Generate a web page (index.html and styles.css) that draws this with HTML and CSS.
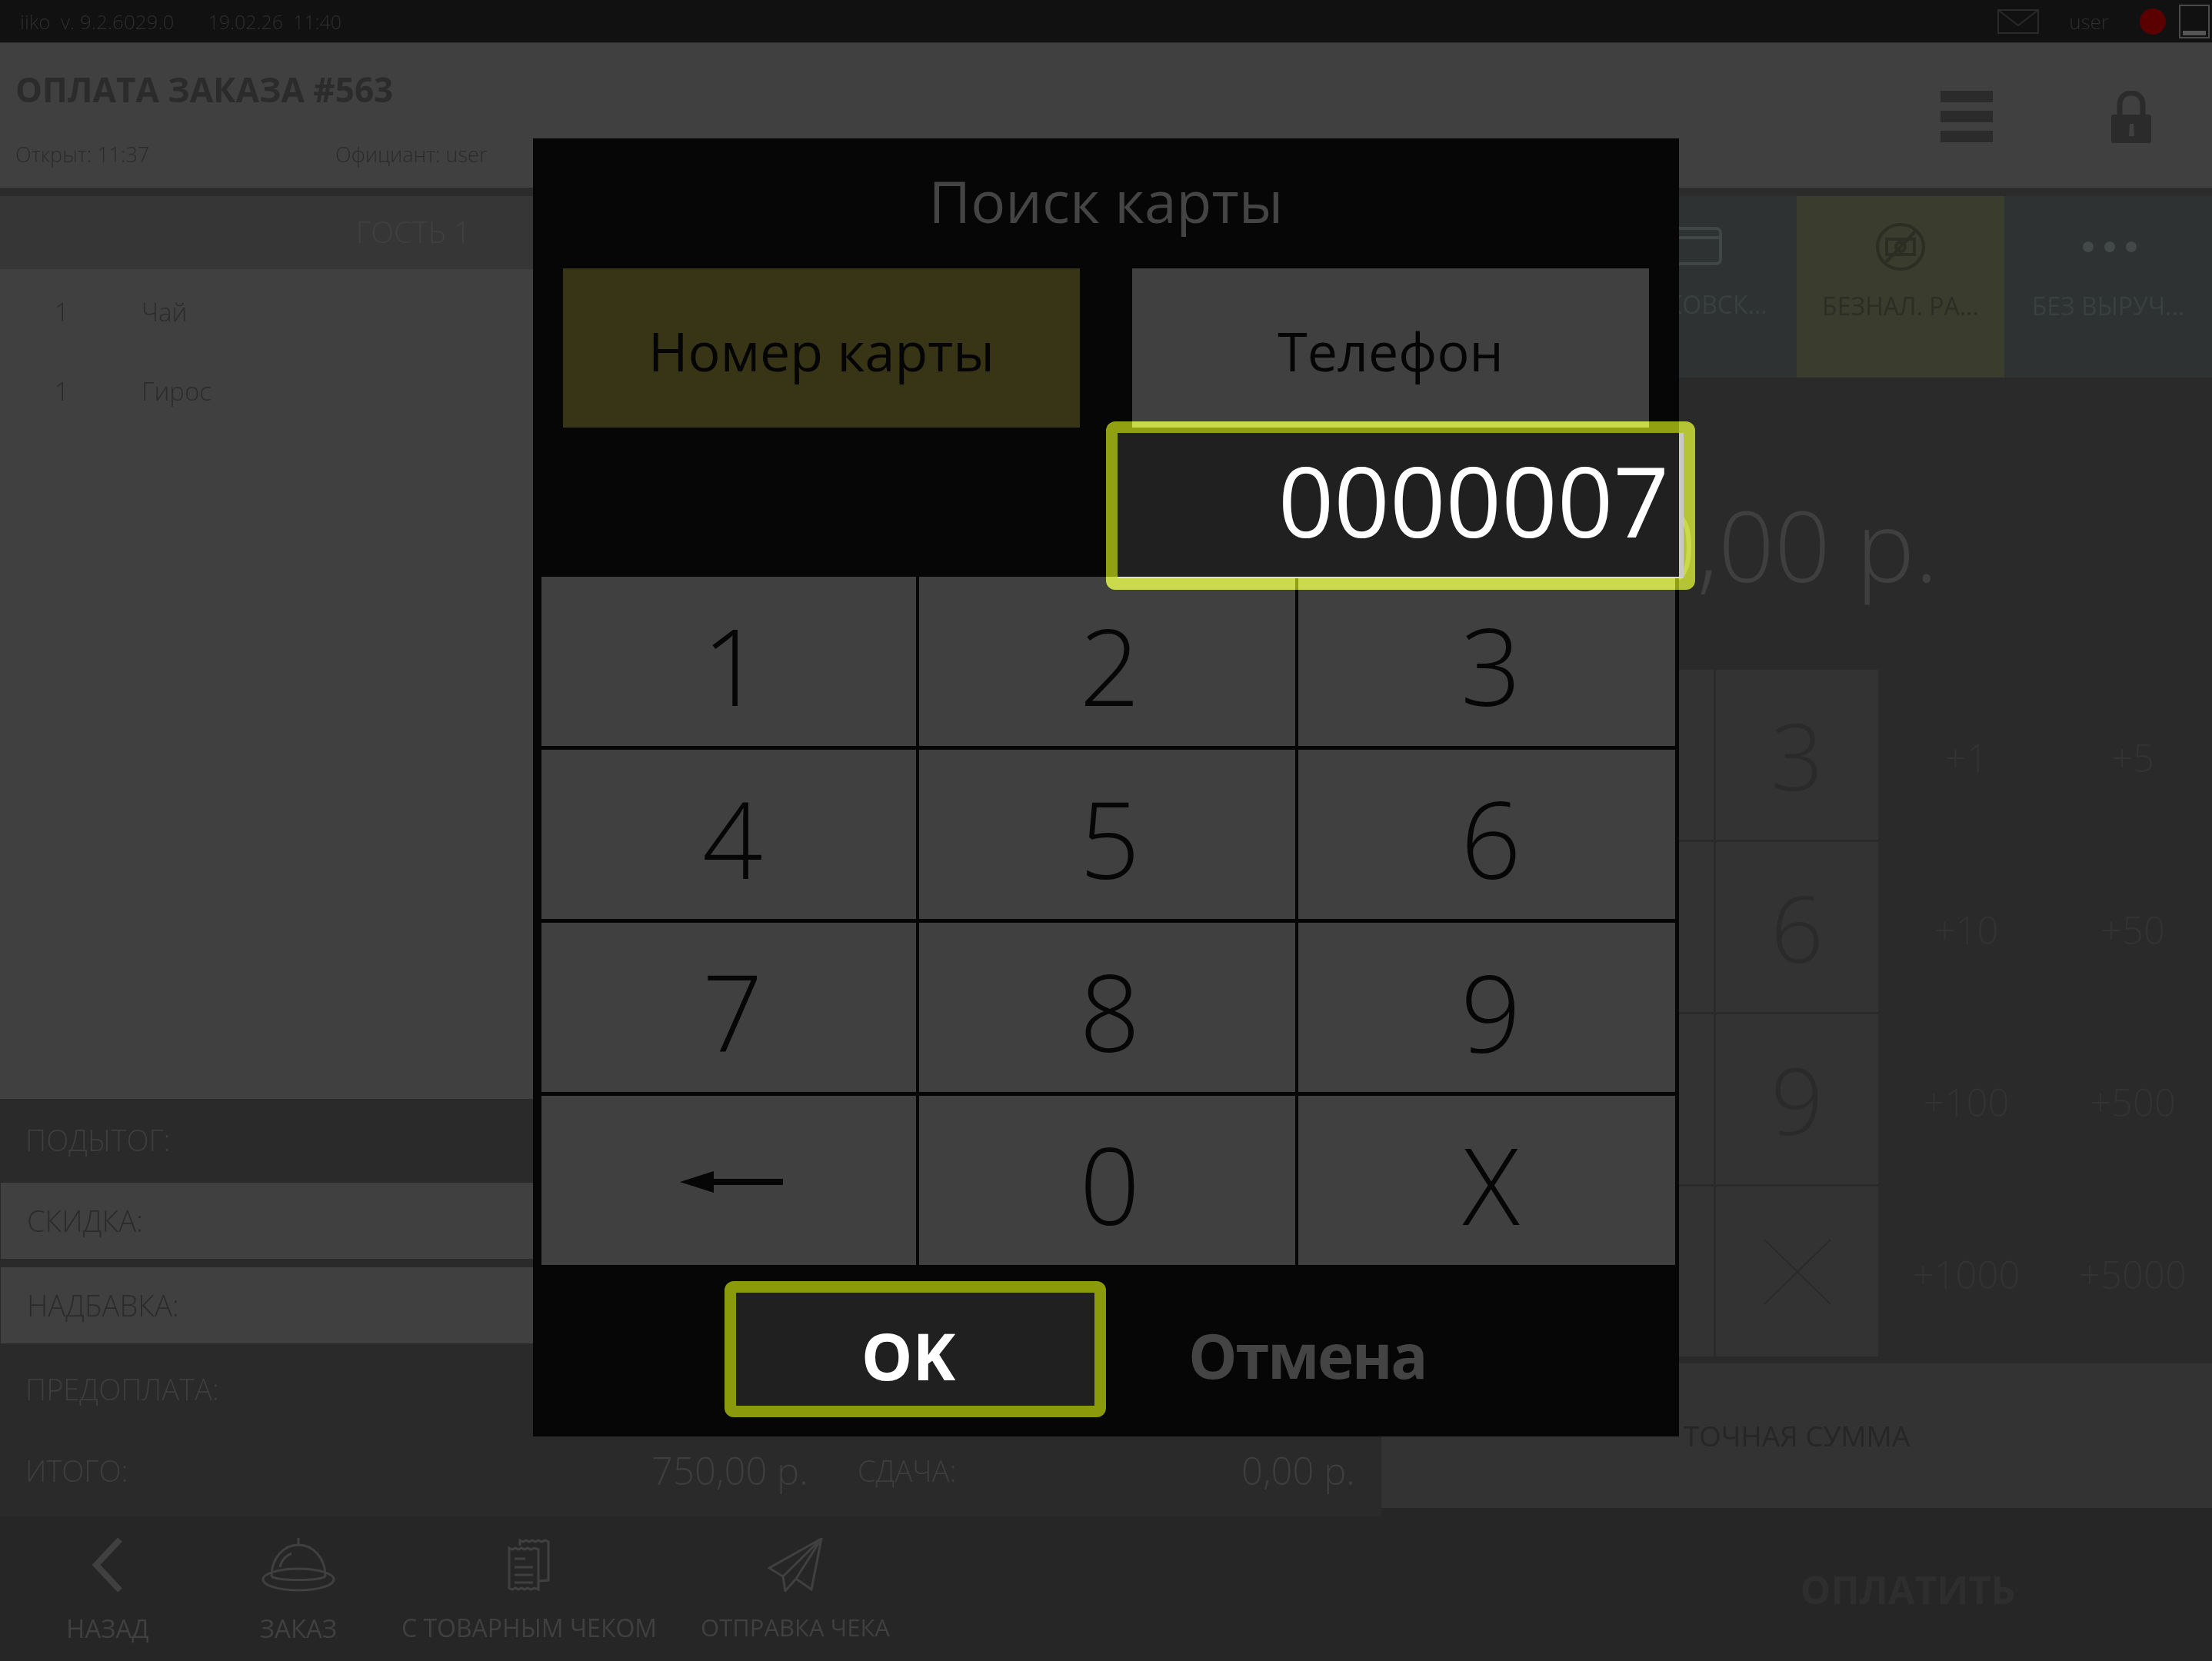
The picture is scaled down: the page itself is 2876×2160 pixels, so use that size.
FILE: index.html
```html
<!DOCTYPE html>
<html lang="ru">
<head>
  <meta charset="UTF-8">
  <title>Оплата заказа</title>
  <link rel="stylesheet" href="styles.css">
</head>
<body>
  <div class="topbar">
    <span class="version">iiko&nbsp; v. 9.2.6029.0</span>
    <span class="clock">19.02.26&nbsp; 11:40</span>
    <svg class="mail" viewBox="0 0 54 32"><path d="M1 1h52v30H1zM1 1l26 20L53 1"/></svg>
    <span class="user">user</span>
    <span class="status-dot"></span>
    <span class="screen"><span class="screen-bar"></span></span>
  </div>

  <div class="header">
    <div class="header-info">
      <h1>ОПЛАТА ЗАКАЗА #563</h1>
      <div class="meta">
        <span class="meta-open">Открыт: 11:37</span>
        <span>Официант: user</span>
      </div>
    </div>
    <div class="burger"><i></i><i></i><i></i></div>
    <svg class="lock" viewBox="0 0 52 68">
      <path class="lock-arc" d="M11 34V19C11 9 17 3 26 3s15 6 15 16v15"/>
      <rect class="lock-body" x="0" y="31" width="52" height="37" rx="3"/>
      <path class="lock-key" d="M24 43h5l1 16h-7z"/>
    </svg>
  </div>

  <div class="page">
    <div class="left">
      <div class="check">
        <div class="guest">ГОСТЬ 1</div>
        <div class="items">
          <div class="item"><span class="qty">1</span><span>Чай</span></div>
          <div class="item"><span class="qty">1</span><span>Гирос</span></div>
        </div>
        <div class="sum-row sum-plain tall">ПОДЫТОГ:</div>
        <div class="sum-row sum-btn">СКИДКА:</div>
        <div class="sum-row sum-btn second">НАДБАВКА:</div>
        <div class="sum-row sum-plain prepaid">ПРЕДОПЛАТА:</div>
      </div>
      <div class="totals">
        <span class="total-label">ИТОГО:</span>
        <span class="total-value">750,00 р.</span>
        <span class="change-label">СДАЧА:</span>
        <span class="change-value">0,00 р.</span>
      </div>
      <div class="footer">
        <div class="foot-btn back">
          <svg width="40" height="70" viewBox="0 0 40 70"><path d="M36 2L5 35l31 33"/></svg>
          <span>НАЗАД</span>
        </div>
        <div class="foot-btn bell">
          <svg width="96" height="70" viewBox="0 0 96 70">
            <path d="M48 0v9M13 50C13 26 29 9 48 9s35 17 35 41M24 38c2-9 8-15 15-18"/>
            <ellipse cx="48" cy="54" rx="46" ry="14"/>
            <path d="M13 50c8 6 62 6 70 0"/>
          </svg>
          <span>ЗАКАЗ</span>
        </div>
        <div class="foot-btn docs">
          <svg width="56" height="70" viewBox="0 0 56 70">
            <path d="M16 10V3l4 2 4-2 4 2 4-2 4 2 4-2 4 2 5-2 4 2v50l-12 1"/>
            <path d="M2 13l4 2 4-2 4 2 4-2 4 2 4-2 4 2 5-2 5 2v52l-5-2-5 2-4-2-4 2-4-2-4 2-4-2-4 2-4-2z"/>
            <path d="M9 27h14M9 38h24M9 48h24M9 58h24"/>
          </svg>
          <span>С ТОВАРНЫМ ЧЕКОМ</span>
        </div>
        <div class="foot-btn plane">
          <svg width="72" height="70" viewBox="0 0 72 70">
            <path d="M70 1L2 39l18 11 3 19 14-16 20 14zM70 1L20 50M70 1L37 53"/>
          </svg>
          <span>ОТПРАВКА ЧЕКА</span>
        </div>
      </div>
    </div>

    <div class="right">
      <div class="pay-tabs">
        <div class="pay-tab"></div>
        <div class="pay-tab">
          <svg class="pay-icon" width="76" height="50" viewBox="0 0 76 50"><rect x="2" y="2" width="72" height="46" rx="6"/><path d="M2 14h72"/></svg>
          <span>БАНКОВСК...</span>
        </div>
        <div class="pay-tab active">
          <svg class="pay-icon" width="64" height="62" viewBox="0 0 64 62">
            <ellipse cx="32" cy="31" rx="30" ry="29"/>
            <rect x="14" y="21" width="36" height="20"/>
            <circle cx="32" cy="31" r="6"/>
            <path d="M12 52L52 10"/>
          </svg>
          <span>БЕЗНАЛ. РА...</span>
        </div>
        <div class="pay-tab">
          <span class="pay-icon dots"><i></i><i></i><i></i></span>
          <span>БЕЗ ВЫРУЧ...</span>
        </div>
      </div>
      <div class="amount">0,00 р.</div>
      <div class="cash-pad">
        <div class="digits">
          <div class="digit"></div><div class="digit"></div><div class="digit">3</div>
          <div class="digit"></div><div class="digit"></div><div class="digit">6</div>
          <div class="digit"></div><div class="digit"></div><div class="digit">9</div>
          <div class="digit"></div><div class="digit"></div>
          <div class="digit"><svg width="88" height="86" viewBox="0 0 88 86"><path d="M1 1l86 84M87 1L1 85"/></svg></div>
        </div>
        <div class="quick">
          <div>+1</div><div>+5</div>
          <div>+10</div><div>+50</div>
          <div>+100</div><div>+500</div>
          <div>+1000</div><div>+5000</div>
        </div>
      </div>
      <div class="exact">ТОЧНАЯ СУММА</div>
      <div class="pay-btn">ОПЛАТИТЬ</div>
    </div>
  </div>

  <div class="dialog">
    <div class="dialog-title">Поиск карты</div>
    <div class="mode-tabs">
      <div class="mode-tab selected">Номер карты</div>
      <div class="mode-tab">Телефон</div>
    </div>
    <div class="keypad">
      <div class="key">1</div><div class="key">2</div><div class="key">3</div>
      <div class="key">4</div><div class="key">5</div><div class="key">6</div>
      <div class="key">7</div><div class="key">8</div><div class="key">9</div>
      <div class="key"><svg class="arrow" width="134" height="28" viewBox="0 0 134 28"><path d="M0 14L44 0v10h90v8H44v10z"/></svg></div>
      <div class="key">0</div><div class="key">X</div>
    </div>
    <div class="actions">
      <div class="ok">OK</div>
      <div class="cancel">Отмена</div>
    </div>
    <div class="card-field">0000007</div>
    <div class="card-ring"></div>
  </div>
</body>
</html>
```

FILE: styles.css
```css
html, body {
  margin: 0;
  padding: 0;
  width: 2876px;
  height: 2160px;
  overflow: hidden;
  background: #2a2a2a;
  font-family: "Open Sans", sans-serif;
}
svg {
  display: block;
}

/* top status line */
.topbar {
  height: 55px;
  background: #111111;
  border-bottom: 1px solid #333333;
  display: flex;
  align-items: center;
  padding-left: 26px;
  font-size: 26px;
  font-weight: 300;
  color: #2e2e2e;
}
.clock {
  margin-left: 44px;
  font-size: 25px;
  white-space: nowrap;
}
.mail {
  width: 54px;
  height: 32px;
  margin-left: auto;
  fill: none;
  stroke: #2a2a2a;
  stroke-width: 2;
}
.user {
  margin-left: 39px;
}
.status-dot {
  width: 34px;
  height: 34px;
  border-radius: 50%;
  background: #5a0000;
  margin-left: 40px;
}
.screen {
  width: 36px;
  height: 40px;
  border: 2px solid #4a4a4a;
  margin: 0 3px 0 17px;
  display: flex;
  align-items: flex-end;
  justify-content: center;
}
.screen-bar {
  width: 30px;
  height: 6px;
  margin-bottom: 2px;
  background: #555555;
}

/* order header */
.header {
  height: 188px;
  background: #404040;
  border-bottom: 11px solid #2b2b2b;
  display: flex;
  align-items: flex-start;
}
.header-info {
  padding: 30px 0 0 20px;
  color: #2b2b2b;
}
h1 {
  margin: 0;
  font-size: 44px;
  line-height: 60px;
  font-weight: 700;
}
.meta {
  margin-top: 37px;
  font-size: 27px;
  font-weight: 300;
  line-height: 36px;
  display: flex;
}
.meta-open {
  width: 416px;
}
.burger {
  margin: 62px 0 0 auto;
  width: 68px;
  display: flex;
  flex-direction: column;
  gap: 11px;
}
.burger i {
  height: 15px;
  background: #2b2b2b;
}
.lock {
  width: 52px;
  height: 68px;
  margin: 62px 79px 0 154px;
}
.lock-arc {
  fill: none;
  stroke: #2b2b2b;
  stroke-width: 7;
}
.lock-body {
  fill: #2b2b2b;
}
.lock-key {
  fill: #404040;
}

.page {
  display: flex;
  height: 1905px;
}
.left {
  width: 1797px;
  display: flex;
  flex-direction: column;
}
.right {
  flex: 1;
  display: flex;
  flex-direction: column;
}

/* check column */
.check {
  width: 1075px;
  height: 1613px;
  display: flex;
  flex-direction: column;
  font-weight: 300;
}
.guest {
  height: 95px;
  line-height: 92px;
  background: #363636;
  text-align: center;
  font-size: 39px;
  color: #404040;
}
.items {
  flex: 1;
  background: #404040;
  padding-top: 4px;
  color: #2b2b2b;
  font-size: 33px;
}
.item {
  height: 103px;
  line-height: 103px;
  display: flex;
}
.qty {
  width: 184px;
  padding-left: 71px;
  box-sizing: border-box;
}
.sum-row {
  font-size: 38px;
  height: 99px;
  line-height: 99px;
  padding-left: 33px;
}
.sum-plain {
  color: #3e3e3e;
}
.tall {
  height: 109px;
  line-height: 106px;
}
.sum-btn {
  background: #404040;
  color: #2b2b2b;
  padding-left: 34px;
  margin-left: 1px;
}
.second {
  margin-top: 11px;
}
.prepaid {
  height: 121px;
  line-height: 118px;
}
.totals {
  height: 104px;
  display: flex;
  align-items: center;
  color: #3e3e3e;
  font-weight: 300;
  font-size: 38px;
  padding-bottom: 16px;
  box-sizing: border-box;
}
.total-label {
  margin-left: 33px;
  width: 814px;
}
.total-value {
  font-size: 49px;
  width: 268px;
}
.change-label {
  width: 499px;
}
.change-value {
  font-size: 49px;
}

/* bottom left buttons */
.footer {
  flex: 1;
  background: #262626;
  display: flex;
  color: #404040;
  font-size: 33px;
}
.foot-btn {
  display: flex;
  flex-direction: column;
  align-items: center;
  padding-top: 28px;
  gap: 25px;
  white-space: nowrap;
}
.foot-btn svg {
  fill: none;
  stroke: #404040;
  stroke-width: 3;
}
.back {
  width: 280px;
}
.back svg {
  stroke-width: 8;
}
.bell {
  width: 216px;
}
.docs {
  width: 384px;
  font-size: 32px;
}
.plane {
  width: 308px;
  font-size: 31px;
}

/* payment types */
.pay-tabs {
  height: 236px;
  display: flex;
  background: #2e3233;
  color: #3a3f40;
  font-size: 32px;
}
.pay-tab {
  width: 270px;
  display: flex;
  flex-direction: column;
  align-items: center;
  white-space: nowrap;
}
.pay-icon {
  height: 62px;
  margin: 35px 0 24px;
  fill: none;
  stroke: #414647;
  stroke-width: 4;
}
.pay-tabs svg.pay-icon {
  flex: none;
}
.pay-tab:nth-child(2) .pay-icon {
  margin-top: 40px;
  margin-bottom: 29px;
  height: 50px;
}
.active {
  background: #3a3c2e;
  color: #2c2e24;
}
.active .pay-icon {
  stroke: #2c2e24;
}
.dots {
  display: flex;
  align-items: center;
  gap: 14px;
  padding-left: 4px;
}
.dots i {
  width: 14px;
  height: 14px;
  border-radius: 50%;
  background: #434849;
}
.amount {
  height: 380px;
  box-sizing: border-box;
  padding: 122px 356px 0 0;
  text-align: right;
  font-size: 128px;
  line-height: 190px;
  font-weight: 300;
  color: #3f3f3f;
  white-space: nowrap;
}

/* cash pad */
.cash-pad {
  height: 902px;
  display: flex;
}
.digits {
  width: 646px;
  display: grid;
  grid-template-columns: 211px 215px 211px;
  grid-template-rows: repeat(4, 221px);
  gap: 3px;
  padding-left: 1px;
  box-sizing: border-box;
  justify-content: end;
}
.digit {
  background: #333333;
  color: #2a2a2a;
  font-size: 120px;
  font-weight: 300;
  display: flex;
  align-items: center;
  justify-content: center;
}
.digit svg {
  fill: none;
  stroke: #2a2a2a;
  stroke-width: 2;
}
.quick {
  flex: 1;
  display: grid;
  grid-template-columns: 226px 207px;
  grid-template-rows: repeat(4, 221px);
  row-gap: 3px;
  color: #333333;
  font-size: 49px;
  font-weight: 300;
}
.quick div {
  display: flex;
  align-items: center;
  justify-content: center;
  padding: 6px 0 0 3px;
}
.exact {
  height: 188px;
  line-height: 188px;
  background: #333333;
  text-align: center;
  color: #262626;
  font-size: 37px;
}
.pay-btn {
  flex: 1;
  background: #262626;
  padding: 72px 0 0 289px;
  text-align: center;
  color: #2e2e2e;
  font-size: 50px;
  font-weight: 700;
}

/* card search dialog */
.dialog {
  position: absolute;
  left: 693px;
  top: 180px;
  width: 1490px;
  height: 1688px;
  background: #060606;
}
.dialog-title {
  height: 169px;
  line-height: 162px;
  text-align: center;
  font-size: 75px;
  color: #444444;
}
.mode-tabs {
  display: flex;
  gap: 68px;
  margin-left: 39px;
  color: #050505;
  font-size: 70px;
}
.mode-tab {
  width: 672px;
  height: 207px;
  line-height: 215px;
  text-align: center;
  background: #404040;
}
.selected {
  background: #383516;
}
.keypad {
  margin: 194px 0 0 11px;
  display: grid;
  grid-template-columns: 487px 489px 490px;
  grid-template-rows: repeat(4, 220px);
  gap: 5px 4px;
}
.key {
  background: #404040;
  color: #060606;
  font-size: 138px;
  font-weight: 300;
  display: flex;
  align-items: center;
  justify-content: center;
  padding: 8px 0 0 7px;
}
.key:nth-child(3n+1) {
  padding-left: 10px;
}
.key:nth-child(3n) {
  padding-left: 11px;
}
.key:nth-child(10) {
  padding-left: 7px;
}
.arrow {
  fill: #060606;
  margin: -4px 0 0 0;
}
.actions {
  display: flex;
  align-items: center;
  margin: 21px 0 0 249px;
  font-size: 84px;
  font-weight: 700;
}
.ok {
  width: 466px;
  height: 147px;
  line-height: 164px;
  border: 15px solid #8a9a0a;
  border-radius: 12px;
  background: #202020;
  color: #ffffff;
  text-align: center;
  text-indent: -18px;
}
.cancel {
  margin-left: 107px;
  color: #444444;
  padding-top: 14px;
  font-size: 80px;
  letter-spacing: -2.5px;
}
.card-field {
  position: absolute;
  left: 760px;
  top: 383px;
  width: 736px;
  height: 189px;
  box-sizing: border-box;
  background: #202020;
  border-right: 6px solid #c8c8c8;
  border-bottom: 2px solid #dddddd;
  color: #ffffff;
  font-size: 127px;
  line-height: 173px;
  text-align: right;
  padding-right: 13px;
}
.card-ring {
  position: absolute;
  left: 745px;
  top: 368px;
  width: 766px;
  height: 219px;
  box-sizing: border-box;
  border: 15px solid #8a9a0a;
  border-radius: 12px;
  mix-blend-mode: plus-lighter;
}
```
